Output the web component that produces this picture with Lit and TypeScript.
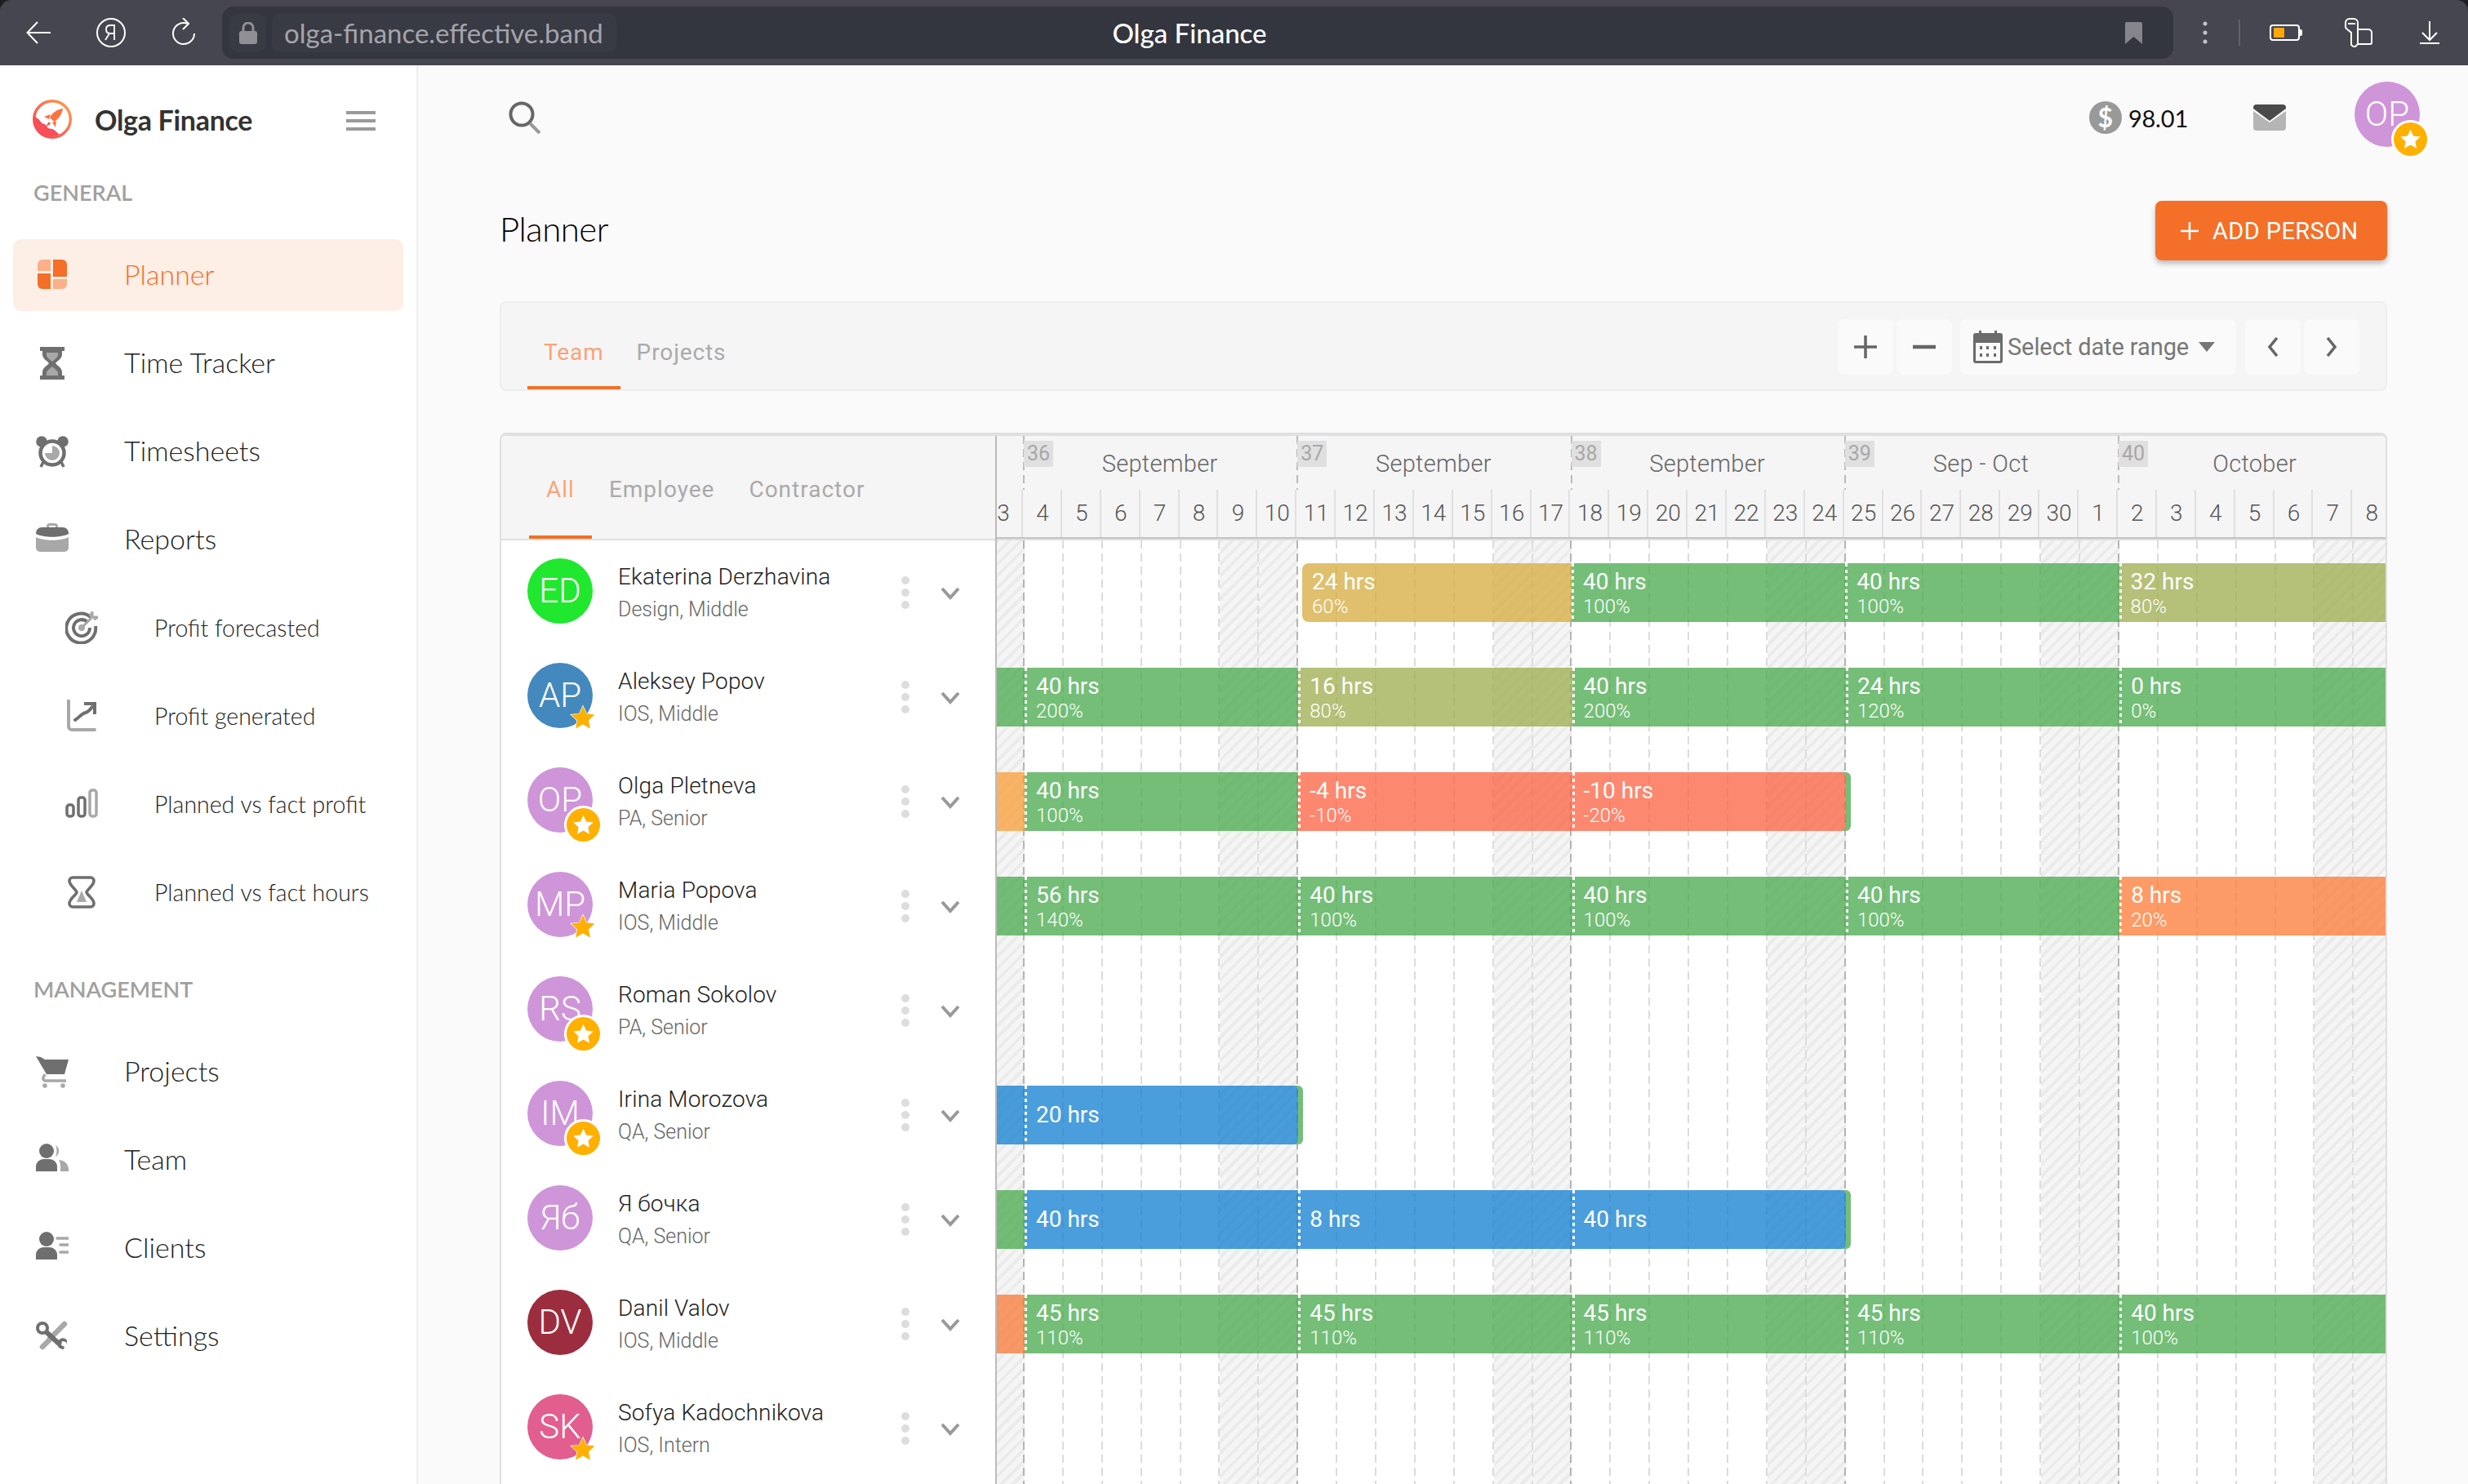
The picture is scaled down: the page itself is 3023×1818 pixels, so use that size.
import { LitElement, html, css, svg } from "lit";
import { customElement } from "lit/decorators.js";

const D = "#6f6f6f", L = "#a8a8a8";
const ic = (c: unknown, s = 40) => html`<svg class="ico" width=${s} height=${s} viewBox="0 0 40 40">${c}</svg>`;

const icons: Record<string, unknown> = {
  planner: svg`<path d="M2 7a6 6 0 0 1 6-6h10v14H2z" fill="#fbb08a"/><path d="M2 18h16v19H8a6 6 0 0 1-6-6z" fill="#f46f27"/><path d="M21 1h11a6 6 0 0 1 6 6v15H21z" fill="#f46f27"/><path d="M21 25h17v6a6 6 0 0 1-6 6H21z" fill="#fbb08a"/>`,
  hour: svg`<path d="M5 0h30v5h-3v4c0 6-6 8-8 11 2 3 8 5 8 11v4h3v5H5v-5h3v-4c0-6 6-8 8-11-2-3-8-5-8-11V5H5z" fill="${D}"/><path d="M13 7h14v3c0 3-4 5-7 8-3-3-7-5-7-8z" fill="${L}"/><path d="M20 24c3 3 7 5 7 8v3H13v-3c0-3 4-5 7-8z" fill="${L}"/>`,
  clock: svg`<circle cx="7" cy="8" r="6.800" fill="${D}"/><circle cx="33" cy="8" r="6.800" fill="${D}"/><path d="M9 33l-3 6M31 33l3 6" stroke="${D}" stroke-width="3.600"/><circle cx="20" cy="22" r="14.500" fill="#fff" stroke="${D}" stroke-width="4.500"/><path d="M20 13a9 9 0 1 1-9 9h9z" fill="${L}"/>`,
  brief: svg`<path d="M13 6V4a4 4 0 0 1 4-4h6a4 4 0 0 1 4 4v2h-3V3h-8v3z" fill="${L}"/><path d="M0 12a7 7 0 0 1 7-7h26a7 7 0 0 1 7 7v1c-10 5-30 5-40 0z" fill="${D}"/><path d="M0 17c10 5 30 5 40 0v13a5 5 0 0 1-5 5H5a5 5 0 0 1-5-5z" fill="${L}"/>`,
  target: svg`<path d="M31 7A18 18 0 1 0 37 18" fill="none" stroke="${D}" stroke-width="4"/><path d="M27 13a10 10 0 1 0 3 7" fill="none" stroke="${D}" stroke-width="4"/><circle cx="20" cy="20" r="4" fill="${L}"/><path d="M20 20L33 7M30 6l3-5v6h7l-5 3" stroke="${L}" stroke-width="3" fill="none"/>`,
  chart: svg`<path d="M4 1v32a4 4 0 0 0 4 4h28" fill="none" stroke="${L}" stroke-width="4" stroke-linecap="round"/><path d="M12 25c5-3 8-8 13-9 3-1 5-3 8-7" fill="none" stroke="${D}" stroke-width="4" stroke-linecap="round"/><path d="M23 5h13v13" fill="none" stroke="${D}" stroke-width="4"/>`,
  bars: svg`<rect x="2" y="21" width="8" height="14" rx="3" fill="none" stroke="${D}" stroke-width="3.5"/><rect x="16" y="12" width="8" height="23" rx="3" fill="none" stroke="${D}" stroke-width="3.5"/><rect x="30" y="3" width="8" height="32" rx="3" fill="none" stroke="${L}" stroke-width="3.5"/>`,
  hour2: svg`<path d="M9 2h22a4 4 0 0 1 4 4c0 6-8 10-9 14 1 4 9 8 9 14a4 4 0 0 1-4 4H9a4 4 0 0 1-4-4c0-6 8-10 9-14-1-4-9-8-9-14a4 4 0 0 1 4-4z" fill="none" stroke="${D}" stroke-width="3.6"/><path d="M20 18l-6 14h12z" fill="${L}"/>`,
  cart: svg`<path d="M0 1l6 1 5 3h29l-5 18H13z" fill="${D}"/><path d="M11 23l-2 4a3 3 0 0 0 3 4h25" fill="none" stroke="${L}" stroke-width="3.5"/><circle cx="11" cy="37" r="2.8" fill="${L}"/><circle cx="33" cy="37" r="2.8" fill="${L}"/>`,
  team: svg`<circle cx="13" cy="9" r="9" fill="${D}"/><path d="M0 34v-6a9 9 0 0 1 9-9h8a9 9 0 0 1 9 9v6z" fill="${D}"/><path d="M24 2a8 8 0 0 1 0 14c2-4 2-10 0-14zM28 20a12 12 0 0 1 12 10v4H30v-7c0-3-1-5-2-7z" fill="${L}"/>`,
  clients: svg`<circle cx="13" cy="9" r="9" fill="${D}"/><path d="M0 34v-6a9 9 0 0 1 9-9h8a9 9 0 0 1 9 9v6z" fill="${D}"/><path d="M26 8h14M30 16h10M30 25h10" stroke="${L}" stroke-width="3.6" stroke-linecap="round"/>`,
  settings: svg`<path d="M35 5L17 23" stroke="${L}" stroke-width="6.500" stroke-linecap="round"/><path d="M17 24L8 33" stroke="${L}" stroke-width="6.500" stroke-linecap="round"/><path d="M13 15l15 14" stroke="${D}" stroke-width="6"/><circle cx="8" cy="10" r="6" fill="#fff" stroke="${D}" stroke-width="4"/><path d="M26 27c-1 5 3 9 8 9l1-3-4-2 1-5 5 1 1 3 0-5c-3-4-8-4-12 2z" fill="${D}"/>`,
};

const nav = [
  { t: "Planner", i: "planner", k: "on" },
  { t: "Time Tracker", i: "hour", k: "" },
  { t: "Timesheets", i: "clock", k: "" },
  { t: "Reports", i: "brief", k: "" },
  { t: "Profit forecasted", i: "target", k: "sub" },
  { t: "Profit generated", i: "chart", k: "sub" },
  { t: "Planned vs fact profit", i: "bars", k: "sub" },
  { t: "Planned vs fact hours", i: "hour2", k: "sub" },
];
const nav2 = [
  { t: "Projects", i: "cart", k: "" },
  { t: "Team", i: "team", k: "" },
  { t: "Clients", i: "clients", k: "" },
  { t: "Settings", i: "settings", k: "" },
];

const G = "rgba(70,168,75,.75)", Y = "rgba(214,171,59,.75)", O = "rgba(156,171,75,.75)", R = "rgba(252,96,64,.75)",
  A = "rgba(250,156,54,.75)", P = "rgba(252,122,51,.75)", B = "rgba(14,126,208,.75)", Q = "rgba(247,120,54,.75)";
const WK = 335.3;
type Seg = { c: string; w?: number; h?: string; p?: string; start?: boolean; end?: boolean };
const people: { i: string; n: string; r: string; c: string; s: string; bars: Seg[]; lead?: number }[] = [
  { i: "ED", n: "Ekaterina Derzhavina", r: "Design, Middle", c: "#1fe82e", s: "", lead: 374,
    bars: [{ c: Y, w: 330, h: "24 hrs", p: "60%", start: true }, { c: G, h: "40 hrs", p: "100%" }, { c: G, h: "40 hrs", p: "100%" }, { c: O, h: "32 hrs", p: "80%" }] },
  { i: "AP", n: "Aleksey Popov", r: "IOS, Middle", c: "#4489bd", s: "s",
    bars: [{ c: G, w: 34 }, { c: G, h: "40 hrs", p: "200%" }, { c: O, h: "16 hrs", p: "80%" }, { c: G, h: "40 hrs", p: "200%" }, { c: G, h: "24 hrs", p: "120%" }, { c: G, h: "0 hrs", p: "0%" }] },
  { i: "OP", n: "Olga Pletneva", r: "PA, Senior", c: "#cf95d9", s: "b",
    bars: [{ c: A, w: 34 }, { c: G, h: "40 hrs", p: "100%" }, { c: R, h: "-4 hrs", p: "-10%" }, { c: R, h: "-10 hrs", p: "-20%", end: true }] },
  { i: "MP", n: "Maria Popova", r: "IOS, Middle", c: "#cf95d9", s: "s",
    bars: [{ c: G, w: 34 }, { c: G, h: "56 hrs", p: "140%" }, { c: G, h: "40 hrs", p: "100%" }, { c: G, h: "40 hrs", p: "100%" }, { c: G, h: "40 hrs", p: "100%" }, { c: P, h: "8 hrs", p: "20%" }] },
  { i: "RS", n: "Roman Sokolov", r: "PA, Senior", c: "#cf95d9", s: "b", bars: [] },
  { i: "IM", n: "Irina Morozova", r: "QA, Senior", c: "#cf95d9", s: "b",
    bars: [{ c: B, w: 34 }, { c: B, h: "20 hrs", end: true }] },
  { i: "Яб", n: "Я бочка", r: "QA, Senior", c: "#cf95d9", s: "",
    bars: [{ c: G, w: 34 }, { c: B, h: "40 hrs" }, { c: B, h: "8 hrs" }, { c: B, h: "40 hrs", end: true }] },
  { i: "DV", n: "Danil Valov", r: "IOS, Middle", c: "#9b2d3e", s: "",
    bars: [{ c: Q, w: 34 }, { c: G, h: "45 hrs", p: "110%" }, { c: G, h: "45 hrs", p: "110%" }, { c: G, h: "45 hrs", p: "110%" }, { c: G, h: "45 hrs", p: "110%" }, { c: G, h: "40 hrs", p: "100%" }] },
  { i: "SK", n: "Sofya Kadochnikova", r: "IOS, Intern", c: "#e25e8f", s: "s", bars: [] },
];

const weeks = [
  { n: 36, m: "September" }, { n: 37, m: "September" }, { n: 38, m: "September" }, { n: 39, m: "Sep - Oct" }, { n: 40, m: "October" },
];
const days = [3, 4, 5, 6, 7, 8, 9, 10, 11, 12, 13, 14, 15, 16, 17, 18, 19, 20, 21, 22, 23, 24, 25, 26, 27, 28, 29, 30, 1, 2, 3, 4, 5, 6, 7, 8];

const star = svg`<path d="M12 1.5l3.2 7 7.6.9-5.6 5.2 1.5 7.5L12 18.3 5.3 22.1l1.5-7.5L1.2 9.4l7.6-.9z"/>`;

@customElement("app-root")
export class AppRoot extends LitElement {
  static styles = css`
    :host { display: block; width: 3023px; height: 1818px; overflow: hidden; background: #1d1d22; font-family: "Lato", sans-serif; color: #333; --u: "Roboto", sans-serif; }
    .ico { display: block; flex: none; }
    .chrome { height: 80px; background: #464650; border-radius: 14px 14px 0 0; display: flex; align-items: center; position: relative; box-sizing: border-box; }
    .chrome svg { flex: none; display: block; }
    .back { margin-left: 32px; }
    .ya { margin-left: 56px; }
    .reload { margin-left: 57px; }
    .url { margin-left: 31px; width: 2390px; height: 64px; background: #33353f; border-radius: 14px; display: flex; align-items: center; box-sizing: border-box; padding-left: 9px; padding-right: 38px; }
    .lockc { width: 45px; height: 47px; border-radius: 10px; background: #383a44; display: flex; align-items: center; justify-content: center; }
    .host { margin-left: 7px; height: 47px; width: 422px; box-sizing: border-box; padding-left: 15px; border-radius: 10px; background: #383a44; color: #a4a5aa; font-size: 33px; line-height: 47px; }
    .sp { flex: 1; }
    .ctitle { position: absolute; left: 0; width: 2914px; top: 0; line-height: 80px; text-align: center; color: #fff; font-size: 33px; font-weight: 500; pointer-events: none; }
    .cdots { margin-left: 36px; }
    .cdiv { width: 2px; height: 32px; background: #62626b; margin-left: 38px; }
    .body { display: flex; height: 1738px; background: #fafafa; }
    .side { width: 512px; flex: none; background: #fff; border-right: 2px solid #eee; box-sizing: border-box; padding-top: 42px; }
    .brand { display: flex; align-items: center; height: 48px; padding-left: 40px; }
    .brandname { margin-left: 28px; font-size: 34px; font-weight: 700; color: #333; letter-spacing: -.3px; width: 308px; flex: none; }
    .burger { width: 36px; display: flex; flex-direction: column; gap: 6px; margin-top: 3px; }
    .burger i { display: block; height: 4px; background: #9a9a9a; }
    .cap { font-size: 27px; font-weight: 600; color: #a0a0a0; padding-left: 41px; line-height: 34px; }
    .cap.g { margin-top: 49px; }
    .cap.m { margin-top: 58px; }
    .navs { margin-top: 40px; }
    .nv { height: 88px; margin: 0 16px 20px; display: flex; align-items: center; border-radius: 10px; padding-left: 28px; font-size: 34px; font-weight: 300; color: #222; }
    .nv .lbl { margin-left: 68px; margin-top: -3px; }
    .nv.on { background: #fdeee6; color: #f46f27; }
    .nv.sub { padding-left: 64px; font-size: 28.500px; font-weight: 300; color: #222; }
    .nv.sub .lbl { margin-left: 69px; margin-top: 0; }
    .main { flex: 1; min-width: 0; box-sizing: border-box; padding: 0 99px 0 100px; }
    .top { height: 128px; display: flex; align-items: center; }
    .search { margin-left: 11px; }
    .coin { margin-left: auto; width: 40px; height: 40px; border-radius: 50%; background: #999; color: #fff; font: 700 32px/40px "Lato", sans-serif; text-align: center; }
    .money { margin-left: 8px; font: 400 29px "Lato", sans-serif; letter-spacing: -.2px; color: #111; }
    .mail { margin-left: 80px; }
    .me { margin-left: 84px; margin-right: -40px; position: relative; align-self: flex-start; margin-top: 20px; }
    .av { width: 80px; height: 80px; border-radius: 50%; color: #fff; font-family: var(--u); font-weight: 300; font-size: 42px; line-height: 80px; text-align: center; position: relative; flex: none; }
    .badge { position: absolute; left: 48px; top: 50px; width: 41px; height: 41px; border-radius: 50%; background: #ffb000; box-shadow: 0 0 0 3px #fff; display: flex; align-items: center; justify-content: center; }
    .badge svg { fill: #fff; display: block; }
    .sm { position: absolute; left: 52px; top: 51px; display: block; fill: #ffb000; stroke: #fff; stroke-width: 1; paint-order: stroke; }
    .titlerow { display: flex; align-items: center; justify-content: space-between; height: 73px; margin-top: 38px; }
    h1 { margin: -5px 0 0; font-size: 42px; font-weight: 300; color: #000; letter-spacing: -.5px; }
    .add { width: 284px; height: 73px; background: #f46f27; border-radius: 8px; box-shadow: 0 4px 6px rgba(0,0,0,.25); color: #fff; display: flex; align-items: center; padding-left: 31px; box-sizing: border-box; font-family: var(--u); font-size: 29px; font-weight: 400; letter-spacing: .4px; gap: 17px; }
    .bar { margin-top: 50px; height: 110px; background: #f5f5f5; border: 2px solid #eee; border-radius: 8px; box-sizing: border-box; display: flex; }
    .tabs { display: flex; font-family: var(--u); font-size: 28px; letter-spacing: .9px; color: #aaa; font-weight: 400; }
    .tab { position: relative; display: flex; align-items: center; padding: 0 21px; height: 100%; }
    .tab.on { color: #f9a47a; }
    .tab.on::after { content: ""; position: absolute; left: 0; right: 0; bottom: 0; height: 4px; background: #f46f27; }
    .bar .tabs { margin-left: 32px; padding-top: 14px; box-sizing: border-box; }
    .bar .tab { padding: 0 20px; }
    .tools { margin-left: auto; margin-right: 32px; display: flex; padding-top: 20px; height: 68px; color: #666; }
    .t { width: 68px; height: 68px; background: #fafafa; border-radius: 8px; display: flex; align-items: center; justify-content: center; margin-left: 4px; }
    .t.date { width: 338px; margin-left: 10px; justify-content: flex-start; padding-left: 16px; box-sizing: border-box; font-family: var(--u); font-size: 29px; font-weight: 400; color: #777; gap: 6px; margin-right: 7px; letter-spacing: -.1px; }
    .caret { width: 0; height: 0; border: 10px solid transparent; border-top: 12px solid #777; border-bottom: 0; margin-left: 6px; }
    .table { margin-top: 51px; height: 1400px; border: 2px solid #e0e0e0; border-top-width: 4px; border-radius: 8px 8px 0 0; background: #fff; box-sizing: border-box; display: flex; overflow: hidden; }
    .left { width: 605px; flex: none; border-right: 2px solid #bbb; box-sizing: content-box; }
    .lhead { height: 128px; background: #f5f5f5; border-bottom: 2px solid #e0e0e0; box-sizing: border-box; }
    .lhead .tabs { height: 126px; padding-left: 34px; padding-top: 4px; box-sizing: border-box; letter-spacing: 1px; }
    .person { height: 128px; box-sizing: border-box; padding: 22px 43px 0 32px; display: flex; align-items: flex-start; }
    .info { margin-left: 31px; flex: 1; padding-top: 3px; font-family: var(--u); min-width: 0; }
    .nm { font-size: 28px; line-height: 40px; font-weight: 300; color: #222; white-space: nowrap; letter-spacing: .15px; }
    .rl { font-size: 25px; line-height: 39px; font-weight: 300; color: #666; white-space: nowrap; }
    .dots { display: flex; flex-direction: column; gap: 5px; margin-top: 22px; }
    .dots i { width: 10px; height: 10px; border-radius: 50%; background: #ddd; display: block; }
    .chev { margin-left: 38px; margin-top: 35px; display: block; }
    .tl { flex: 1; min-width: 0; overflow: hidden; }
    .thead { height: 128px; background: #f5f5f5; border-bottom: 2px solid #e0e0e0; box-sizing: border-box; overflow: hidden; }
    .wks { display: flex; height: 66px; margin-left: 32px; }
    .wk { width: 335.25px; flex: none; box-sizing: border-box; position: relative; display: flex; align-items: flex-start; background: repeating-linear-gradient(to bottom,#bbb 0 10px,transparent 10px 16px) 0 0/2px 100% no-repeat; }
    .wkn { margin: 6px 0 0 1px; height: 32px; padding: 0 4px; background: #e0e0e0; color: #a8a8a8; font: 400 25px/32px var(--u); }
    .wkm { position: absolute; left: 0; right: 0; top: 14px; text-align: center; color: #666; font: 300 29px/40px var(--u); letter-spacing: .3px; }
    .dys { display: grid; grid-template-columns: repeat(36, 47.893px); margin-left: -15.9px; height: 58px; border-bottom: 3px solid #c4c4c4; box-sizing: content-box; }
    .dy { text-align: center; font: 300 28px/58px var(--u); color: #555; background: linear-gradient(#e0e0e0,#e0e0e0) 100% 0/2px 100% no-repeat; }
    .tbody { display: grid; height: 1280px; }
    .tbody > * { grid-area: 1 / 1; min-width: 0; }
    .cols { display: grid; grid-template-columns: repeat(36, 47.893px); margin-left: -13.9px; }
    .col { background: repeating-linear-gradient(to bottom,#dcdcdc 0 10px,transparent 10px 16px) 100% 0/2px 100% no-repeat; }
    .col.wkl { background: repeating-linear-gradient(to bottom,#bbb 0 10px,transparent 10px 16px) 100% 0/2px 100% no-repeat; }
    .col.we { background: repeating-linear-gradient(to bottom,#dcdcdc 0 10px,transparent 10px 16px) 100% 0/2px 100% no-repeat, repeating-linear-gradient(-45deg,#f5f5f5 0 6px,#ebebeb 6px 10px); }
    .col.we.wkl { background: repeating-linear-gradient(to bottom,#b4b4b4 0 10px,transparent 10px 16px) 100% 0/2px 100% no-repeat, repeating-linear-gradient(-45deg,#f5f5f5 0 6px,#ebebeb 6px 10px); }
    .rows { display: flex; flex-direction: column; }
    .row { height: 128px; flex: none; padding-top: 28px; box-sizing: border-box; display: flex; }
    .seg { height: 72px; flex: none; box-sizing: border-box; padding-left: 14px; color: #fff; font-family: var(--u); display: flex; flex-direction: column; justify-content: center; overflow: hidden; white-space: nowrap; }
    .seg.dot { background-image: repeating-linear-gradient(to bottom,#fff 0 4px,transparent 4px 8px); background-size: 3px 100%; background-repeat: no-repeat; background-position: 0 0; }
    .seg.st { border-radius: 8px 0 0 8px; background-image: none; padding-left: 12px; }
    .seg.en { box-shadow: inset -6px 0 0 #74be78; border-radius: 0 6px 6px 0; }
    .seg b { font-weight: 400; font-size: 28px; line-height: 34px; }
    .seg span { font-weight: 300; font-size: 24px; line-height: 27px; }
  `;

  private seg(s: Seg) {
    const w = s.w ?? WK + (s.end ? 6 : 0);
    const cls = ["seg", s.h ? "dot" : "", s.start ? "st" : "", s.end ? "en" : ""].join(" ");
    return html`<div class=${cls} style="width:${w}px;background-color:${s.c}">${s.h ? html`<b>${s.h}</b>` : ""}${s.p ? html`<span>${s.p}</span>` : ""}</div>`;
  }

  private av(p: { i: string; c: string; s: string }) {
    return html`<div class="av" style="background:${p.c}">${p.i}
      ${p.s === "b" ? html`<div class="badge"><svg width="27" height="27" viewBox="0 0 24 24">${star}</svg></div>` : ""}
      ${p.s === "s" ? html`<svg class="sm" width="32" height="32" viewBox="0 0 24 24">${star}</svg>` : ""}
    </div>`;
  }

  render() {
    return html`
      <div class="chrome">
        <svg class="back" width="30" height="28" viewBox="0 0 30 28"><path d="M30 14H2M14 1L1.5 14 14 27" fill="none" stroke="#fff" stroke-width="2"/></svg>
        <svg class="ya" width="36" height="36" viewBox="0 0 36 36"><circle cx="18" cy="18" r="17" fill="none" stroke="#fff" stroke-width="2"/><path d="M22 27V9h-5c-3 0-5 2-5 5s2 5 5 5h5M16 19l-5 8" fill="none" stroke="#fff" stroke-width="1.8"/></svg>
        <svg class="reload" width="30" height="36" viewBox="0 0 30 36"><path d="M19 7A13 13 0 1 0 27 19" fill="none" stroke="#fff" stroke-width="2"/><path d="M13 0l7 7-7 7" fill="none" stroke="#fff" stroke-width="2"/></svg>
        <div class="url">
          <div class="lockc"><svg width="22" height="27" viewBox="0 0 22 27"><path d="M5 12V7a6 6 0 0 1 12 0v5" fill="none" stroke="#8f9094" stroke-width="3"/><rect y="11" width="22" height="16" rx="3" fill="#8f9094"/></svg></div>
          <div class="host">olga-finance.effective.band</div>
          <div class="sp"></div>
          <svg width="21" height="27" viewBox="0 0 21 27"><path d="M2 0h17a2 2 0 0 1 2 2v25l-10.500-9L0 27V2a2 2 0 0 1 2-2z" fill="#85868b"/></svg>
        </div>
        <div class="ctitle">Olga Finance</div>
        <svg class="cdots" width="6" height="28" viewBox="0 0 6 28"><circle cx="3" cy="3" r="2.500" fill="#c4c4c8"/><circle cx="3" cy="14" r="2.500" fill="#c4c4c8"/><circle cx="3" cy="25" r="2.500" fill="#c4c4c8"/></svg>
        <div class="cdiv"></div>
        <svg style="margin-left:36px" width="40" height="20" viewBox="0 0 40 20"><rect x="1" y="1" width="35" height="18" rx="3" fill="none" stroke="#fff" stroke-width="2"/><rect x="5" y="4" width="13" height="12" rx="1" fill="#ffa70b"/><path d="M37 6h1a2 2 0 0 1 2 2v4a2 2 0 0 1-2 2h-1z" fill="#fff"/></svg>
        <svg style="margin-left:51px" width="35" height="36" viewBox="0 0 35 36"><path d="M2 6a5 5 0 0 1 5-5h5a5 5 0 0 1 5 5v8h13a4 4 0 0 1 4 4v12a2 2 0 0 1-2 2H17l-4 4-4-3V18L3 13a3 3 0 0 1-1-3zM5 7h9M17 14v18" fill="none" stroke="#fff" stroke-width="2"/></svg>
        <svg style="margin-left:58px" width="24" height="28" viewBox="0 0 24 28"><path d="M12 0v23M3 14l9 9 9-9M0 27h24" fill="none" stroke="#fff" stroke-width="2"/></svg>
      </div>
      <div class="body">
        <aside class="side">
          <div class="brand">
            <svg width="48" height="48" viewBox="0 0 48 48" style="flex:none"><defs><linearGradient id="lg" x1="0" y1="1" x2="1" y2="0"><stop offset="0" stop-color="#f63d55"/><stop offset="1" stop-color="#fca24b"/></linearGradient></defs><circle cx="24" cy="24" r="22.300" fill="#fff" stroke="url(#lg)" stroke-width="3.400"/><path d="M2 20c3 3 5 3 7 6 2 4 5 3 8 6 1 3 4 4 7 4 3 1 5 4 9 7-7 3-17 3-24-3C3 36 0 28 2 20z" fill="#f84e57"/><path d="M37 11c-7 1-13 5-16 11l5 5c6-3 10-9 11-16z" fill="#f9743f"/><path d="M22 18l-8 3 6 3zM29 26l-1 8-4-6z" fill="#f9743f"/><path d="M20 27l-4 6 6-3z" fill="#f84e57"/></svg>
            <div class="brandname">Olga Finance</div>
            <div class="burger"><i></i><i></i><i></i></div>
          </div>
          <div class="cap g">GENERAL</div>
          <div class="navs">${nav.map((n) => html`<div class="nv ${n.k}">${ic(icons[n.i])}<span class="lbl">${n.t}</span></div>`)}</div>
          <div class="cap m">MANAGEMENT</div>
          <div class="navs">${nav2.map((n) => html`<div class="nv ${n.k}">${ic(icons[n.i])}<span class="lbl">${n.t}</span></div>`)}</div>
        </aside>
        <main class="main">
          <div class="top">
            <svg class="search" width="40" height="40" viewBox="0 0 40 40"><circle cx="16" cy="16" r="13.500" fill="none" stroke="#666" stroke-width="4"/><path d="M26 27l12 12" stroke="#999" stroke-width="4"/></svg>
            <div class="coin">$</div>
            <div class="money">98.01</div>
            <svg class="mail" width="40" height="32" viewBox="0 0 40 32"><path d="M0 8l20 14L40 8v20a4 4 0 0 1-4 4H4a4 4 0 0 1-4-4z" fill="#b5b5b5"/><path d="M4 0h32a4 4 0 0 1 4 4v1L20 20 0 5V4a4 4 0 0 1 4-4z" fill="#4a4a4a"/></svg>
            <div class="me">${this.av({ i: "OP", c: "#cf95d9", s: "b" })}</div>
          </div>
          <div class="titlerow">
            <h1>Planner</h1>
            <div class="add"><svg width="22" height="22" viewBox="0 0 22 22" style="flex:none"><path d="M11 0v22M0 11h22" stroke="#fff" stroke-width="2.500"/></svg>ADD PERSON</div>
          </div>
          <div class="bar">
            <div class="tabs"><div class="tab on">Team</div><div class="tab">Projects</div></div>
            <div class="tools">
              <div class="t"><svg width="30" height="30" viewBox="0 0 30 30"><path d="M15 1v28M1 15h28" stroke="#666" stroke-width="3.500"/></svg></div>
              <div class="t"><svg width="30" height="6" viewBox="0 0 30 6"><path d="M1 3h28" stroke="#666" stroke-width="4.500"/></svg></div>
              <div class="t date"><svg width="36" height="40" viewBox="0 0 36 40" style="flex:none"><path d="M7 0h3v6H7zM26 0h3v6h-3z" fill="#6b6b6b"/><rect y="3" width="36" height="37" rx="3" fill="#6b6b6b"/><rect x="3" y="15" width="30" height="22" fill="#fafafa"/><path d="M8 19h3v4H8zM16 19h3v4h-3zM25 19h3v4h-3zM8 28h3v4H8zM16 28h3v4h-3zM25 28h3v4h-3z" fill="#6b6b6b"/></svg>Select date range<i class="caret"></i></div>
              <div class="t"><svg width="16" height="24" viewBox="0 0 16 24"><path d="M13 1L4 12l9 11" fill="none" stroke="#666" stroke-width="3.500"/></svg></div>
              <div class="t"><svg width="16" height="24" viewBox="0 0 16 24"><path d="M3 1l9 11-9 11" fill="none" stroke="#666" stroke-width="3.500"/></svg></div>
            </div>
          </div>
          <div class="table">
            <div class="left">
              <div class="lhead"><div class="tabs"><div class="tab on">All</div><div class="tab">Employee</div><div class="tab">Contractor</div></div></div>
              ${people.map((p) => html`<div class="person">
                ${this.av(p)}
                <div class="info"><div class="nm">${p.n}</div><div class="rl">${p.r}</div></div>
                <div class="dots"><i></i><i></i><i></i></div>
                <svg class="chev" width="24" height="16" viewBox="0 0 24 16"><path d="M2 2l10 11L22 2" fill="none" stroke="#999" stroke-width="4"/></svg>
              </div>`)}
            </div>
            <div class="tl">
              <div class="thead">
                <div class="wks">${weeks.map((w) => html`<div class="wk"><span class="wkn">${w.n}</span><span class="wkm">${w.m}</span></div>`)}</div>
                <div class="dys">${days.map((d) => html`<div class="dy">${d}</div>`)}</div>
              </div>
              <div class="tbody">
                <div class="cols">${days.map((_, i) => {
                  const we = i % 7 === 0 || i % 7 === 6;
                  return html`<div class="col ${we ? "we" : ""} ${i % 7 === 0 ? "wkl" : ""}"></div>`;
                })}</div>
                <div class="rows">${people.map((p) => html`<div class="row">
                  ${p.lead ? html`<div style="width:${p.lead}px;flex:none"></div>` : ""}
                  ${p.bars.map((s) => this.seg(s))}
                </div>`)}</div>
              </div>
            </div>
          </div>
        </main>
      </div>
    `;
  }
}
